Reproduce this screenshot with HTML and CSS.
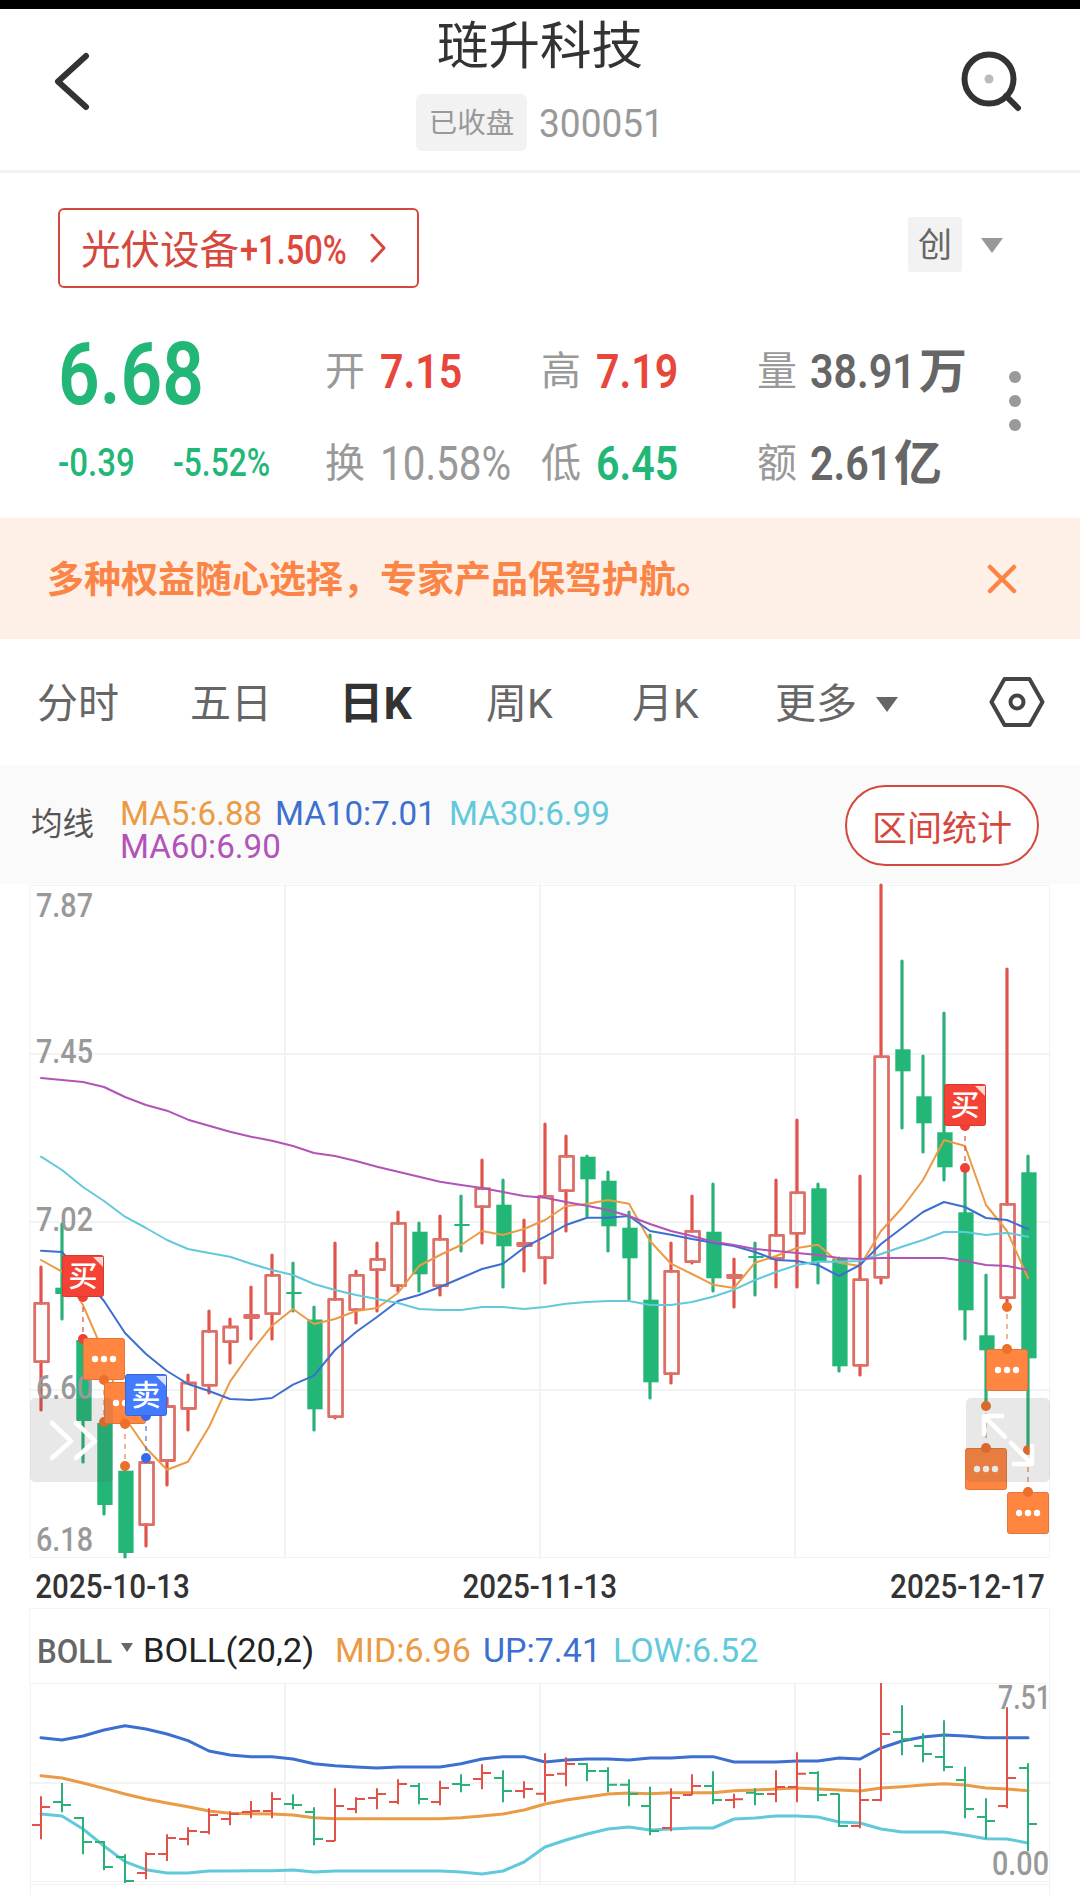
FILE: index.html
```html
<!DOCTYPE html>
<html lang="zh-CN">

<head>
    <meta charset="UTF-8">
    <meta name="viewport" content="width=device-width, initial-scale=1.0">
    <title>琏升科技 300051</title>
    <link rel="stylesheet" href="styles.css">
</head>

<body>
    <header class="header">
        <svg class="back" width="40" height="60" viewBox="0 0 40 60">
            <path d="M34 5L6 30.500L34 56" />
        </svg>
        <div class="stock">
            <h1>琏升科技</h1>
            <div class="stock-sub">
                <span class="status">已收盘</span>
                <span class="code">300051</span>
            </div>
        </div>
        <svg class="search" width="64" height="64" viewBox="0 0 64 64">
            <circle cx="31" cy="29" r="24.500" />
            <path d="M48 46L60 58" />
            <circle class="search-dot" cx="31" cy="29" r="4.500" />
        </svg>
    </header>

    <section class="quote">
        <div class="quote-top">
            <div class="sector">
                <span class="sector-name">光伏设备</span>
                <span class="sector-rate">+1.50%</span>
                <svg width="18" height="30" viewBox="0 0 18 30">
                    <path d="M3 2L15 15L3 28" />
                </svg>
            </div>
            <div class="board">
                <span class="board-tag">创</span>
                <i class="triangle"></i>
            </div>
        </div>
        <div class="quote-main">
            <div class="price">
                <div class="price-now">6.68</div>
                <div class="price-diff">
                    <span><b>-0.39</b></span>
                    <span><b>-5.52%</b></span>
                </div>
            </div>
            <div class="cells">
                <div class="cell"><label>开</label><b class="red">7.15</b></div>
                <div class="cell"><label>高</label><b class="red">7.19</b></div>
                <div class="cell"><label>量</label><b class="vol">38.91</b><em>万</em></div>
                <div class="cell"><label>换</label><b class="gray">10.58%</b></div>
                <div class="cell"><label>低</label><b class="green">6.45</b></div>
                <div class="cell"><label>额</label><b class="amt">2.61</b><em>亿</em></div>
            </div>
            <div class="more"><i></i><i></i><i></i></div>
        </div>
    </section>

    <div class="banner">
        <span>多种权益随心选择，专家产品保驾护航。</span>
        <svg width="30" height="30" viewBox="0 0 30 30">
            <path d="M3 3L27 27M27 3L3 27" />
        </svg>
    </div>

    <nav class="tabs">
        <span class="tab">分时</span>
        <span class="tab">五日</span>
        <span class="tab active">日K</span>
        <span class="tab">周K</span>
        <span class="tab">月K</span>
        <span class="tab">更多<i class="triangle"></i></span>
        <svg class="setting" width="56" height="52" viewBox="0 0 56 52">
            <path d="M15.500 3H40.500L53.500 26L40.500 49H15.500L2.500 26Z" />
            <circle cx="28" cy="26" r="6.500" />
        </svg>
    </nav>

    <div class="ma">
        <span class="ma-name">均线</span>
        <div class="ma-list">
            <span class="orange">MA5:6.88</span>
            <span class="blue">MA10:7.01</span>
            <span class="cyan">MA30:6.99</span>
            <span class="purple">MA60:6.90</span>
        </div>
        <button class="range">区间统计</button>
    </div>

    <svg id="kline" class="chart" width="1080" height="676" viewBox="0 884 1080 676"></svg>

    <div class="dates">
        <span>2025-10-13</span>
        <span>2025-11-13</span>
        <span>2025-12-17</span>
    </div>

    <div class="boll-head">
        <span class="boll-name">BOLL</span>
        <i class="triangle"></i>
        <span class="boll-param">BOLL(20,2)</span>
        <span class="boll-mid orange">MID:6.96</span>
        <span class="boll-up blue">UP:7.41</span>
        <span class="cyan">LOW:6.52</span>
    </div>

    <svg id="boll" class="chart" width="1080" height="212" viewBox="0 1683 1080 212"></svg>

    <script src="chart.js"></script>
</body>

</html>
```
FILE: styles.css
```css
* {
    margin: 0;
    padding: 0;
    box-sizing: border-box;
}

body {
    width: 1080px;
    height: 1895px;
    overflow: hidden;
    background-color: #fff;
    color: #333;
    font-family: Roboto, "Noto Sans CJK SC", sans-serif;
}

svg {
    display: block;
    flex-shrink: 0;
    fill: none;
    stroke-linecap: round;
    stroke-linejoin: round;
}

i,
em {
    font-style: normal;
}

.red {
    color: #e9463b;
}

.green {
    color: #22b777;
}

.orange {
    color: #eb9a45;
}

.blue {
    color: #3d6fd0;
}

.cyan {
    color: #62c9da;
}

.purple {
    color: #b154b8;
}

.triangle {
    display: inline-block;
    border-left: 11px solid transparent;
    border-right: 11px solid transparent;
    border-top: 15px solid #999;
}

/* 顶部 */
.header {
    height: 173px;
    border-top: 9px solid #000;
    border-bottom: 3px solid #f2f2f2;
    padding: 0 56px 0 52px;
    display: flex;
    justify-content: space-between;
}

.back {
    margin-top: 42px;
    stroke: #333;
    stroke-width: 6;
}

.search {
    margin-top: 41px;
    margin-right: 2px;
    stroke: #333;
    stroke-width: 6;
}

.search .search-dot {
    fill: #bbb;
    stroke: none;
}

.stock {
    padding-left: 26px;
    text-align: center;
}

.stock h1 {
    padding-left: 4px;
    font-size: 51.5px;
    font-weight: 400;
    line-height: 76px;
}

.stock-sub {
    display: flex;
    align-items: center;
    margin-top: 9px;
    color: #999;
}

.status {
    width: 111px;
    height: 57px;
    line-height: 59px;
    border-radius: 6px;
    background-color: #f2f2f2;
    font-size: 28.5px;
}

.code {
    width: 121px;
    margin-left: 12px;
    padding-top: 2px;
    font-size: 38px;
    transform: scaleX(0.975);
    transform-origin: left;
}

/* 行情 */
.quote {
    height: 345px;
    padding: 35px 58px 0;
}

.quote-top {
    display: flex;
    justify-content: space-between;
}

.sector {
    width: 361px;
    height: 80px;
    padding-left: 21px;
    border: 2px solid #d5483e;
    border-radius: 6px;
    display: flex;
    align-items: center;
    font-size: 39.5px;
    color: #d5483e;
}

.sector-name {
    margin-top: -3px;
}

.sector-rate {
    width: 129px;
    padding-top: 5px;
    margin-left: 1px;
    font-size: 40px;
    font-weight: 500;
    white-space: nowrap;
    color: #e0473c;
    transform: scaleX(0.815);
    transform-origin: left;
}

.sector svg {
    stroke: #d5483e;
    stroke-width: 3;
}

.board {
    display: flex;
    align-items: center;
    height: 72px;
    padding-right: 19px;
}

.board-tag {
    width: 54px;
    height: 55px;
    margin-right: 19px;
    background-color: #f2f2f2;
    border-radius: 3px;
    font-size: 34px;
    line-height: 56px;
    text-align: center;
    color: #666;
}

.board .triangle {
    margin-top: 2px;
}

.quote-main {
    display: flex;
    margin-top: 37px;
}

.price {
    width: 267px;
    color: #22b777;
}

.price-now {
    height: 98px;
    font-size: 88px;
    font-weight: 600;
    line-height: 98px;
    transform: scaleX(0.83);
    transform-origin: left;
}

.price-diff {
    display: flex;
    margin-top: 16px;
}

.price-diff span {
    width: 115px;
}

.price-diff b {
    display: inline-block;
    font-size: 38px;
    font-weight: 500;
    line-height: 48px;
    transform: scaleX(0.87);
    transform-origin: left;
}

.price-diff span:last-child b {
    transform: scaleX(0.835);
}

.cells {
    display: grid;
    grid-template-columns: 216px 216px 240px;
    grid-template-rows: 92px 92px;
}

.cell {
    display: flex;
    line-height: 93px;
    white-space: nowrap;
}

.cell label {
    width: 55px;
    font-size: 40px;
    color: #999;
}

.cell b {
    font-size: 49px;
    font-weight: 600;
    transform: scaleX(0.84);
    transform-origin: left;
}

.cell .gray {
    font-weight: 400;
    color: #999;
    transform: scaleX(0.825);
}

.cell .vol,
.cell .amt,
.cell em {
    color: #666;
}

.cell .vol {
    margin-left: -2px;
    margin-right: -17px;
}

.cell .amt {
    margin-left: -2px;
    margin-right: -14px;
}

.cell em {
    font-size: 48px;
    font-weight: 700;
}

.more {
    width: 12px;
    margin-left: 12px;
    padding-top: 46px;
    display: flex;
    flex-direction: column;
    gap: 12px;
}

.more i {
    width: 12px;
    height: 12px;
    border-radius: 50%;
    background-color: #999;
}

/* 提示条 */
.banner {
    height: 121px;
    padding: 0 63px 0 47px;
    display: flex;
    align-items: center;
    justify-content: space-between;
    background-color: #fff0e7;
    font-size: 37px;
    font-weight: 700;
    color: #fb8546;
}

.banner span {
    margin-top: -3px;
}

.banner svg {
    stroke: #fb8546;
    stroke-width: 4.5;
}

/* 周期 */
.tabs {
    height: 126px;
    padding: 0 35px 0 37px;
    display: flex;
    align-items: center;
    font-size: 41px;
    color: #666;
}

.tab {
    width: 148px;
    margin-right: 5px;
    margin-top: -5px;
    white-space: nowrap;
}

.tab.active {
    width: 147px;
    margin-left: -4px;
    margin-right: 0;
    font-size: 44.5px;
    font-weight: 700;
    color: #333;
}

.tab:nth-child(4) {
    width: 146px;
    margin-right: 0;
}

.tab:nth-child(5) {
    width: 143px;
    margin-right: 0;
}

.tab:nth-child(6) {
    flex: 1;
}

.tab .triangle {
    margin-left: 19px;
    margin-bottom: 6px;
    border-top-color: #666;
}

.setting {
    stroke: #444;
    stroke-width: 4;
}

/* 均线 */
.ma {
    height: 119px;
    padding: 0 41px 0 31px;
    display: flex;
    align-items: center;
    background-color: #fafafa;
}

.ma-name {
    width: 89px;
    margin-top: -8px;
    font-size: 31.5px;
    color: #555;
}

.ma-list {
    width: 725px;
    margin-top: 10px;
}

.ma-list span {
    float: left;
    width: 155px;
    font-size: 34px;
    line-height: 33px;
    white-space: nowrap;
    transform: scaleX(0.975);
    transform-origin: left;
}

.ma-list .blue {
    width: 174px;
}

.ma-list .cyan {
    width: 300px;
}

.ma-list .purple {
    clear: both;
}

.range {
    width: 194px;
    height: 81px;
    margin-top: 1px;
    border: 2px solid #d5483e;
    border-radius: 41px;
    background-color: #fff;
    font-family: inherit;
    font-size: 35px;
    color: #d5483e;
}

/* 日期 */
.dates {
    height: 48px;
    padding: 1px 35px 0;
    display: flex;
    justify-content: space-between;
    font-size: 34px;
    font-weight: 500;
    line-height: 51px;
}

.dates span {
    transform: scaleX(0.87);
}

.dates span:first-child {
    transform-origin: 2px;
}

.dates span:last-child {
    transform-origin: right;
}

/* BOLL */
.boll-head {
    width: 1021px;
    height: 75px;
    margin-left: 29px;
    padding-left: 7px;
    padding-top: 7px;
    border: 1px solid #f4f4f4;
    border-bottom: none;
    display: flex;
    align-items: center;
    font-size: 34px;
}

.boll-name {
    width: 84px;
    padding-top: 3px;
    color: #666;
    font-weight: 500;
    transform: scaleX(0.92);
    transform-origin: left;
}

.boll-head .triangle {
    border-width: 9px 6.5px 0;
    border-top-color: #666;
    margin-bottom: 4px;
}

.boll-param {
    width: 192px;
    margin-left: 10px;
    color: #222;
    transform: scaleX(1.015);
    transform-origin: left;
}

.boll-mid {
    width: 148px;
}

.boll-up {
    width: 130px;
}

/* 图表 */
.chart {
    overflow: visible;
}

.chart .grid {
    stroke: #f3f3f3;
    stroke-width: 2;
}

.chart .frame {
    stroke: #f3f3f3;
    stroke-width: 1;
}

.chart .axis {
    fill: #999;
    font-size: 34px;
    font-weight: 500;
}

.chart .up {
    stroke: #e0524a;
}

.chart .down {
    stroke: #2bb078;
}

.chart .wick {
    stroke-width: 3.2;
}

.chart .box {
    fill: none;
    stroke: #dc6f66;
    stroke-width: 2.8;
}

.chart .bar {
    fill: #22b777;
}

.chart .ma-line {
    stroke-width: 2;
}

.chart .boll-line {
    stroke-width: 3;
}

.chart .ohlc {
    stroke-width: 2;
    stroke-linecap: butt;
}

.chart .marker {
    fill: #fff;
    font-size: 29px;
    font-weight: 500;
    text-anchor: middle;
}

.chart .dash {
    stroke-width: 2;
    stroke-dasharray: 5 5;
    stroke-linecap: butt;
    opacity: 0.55;
}

.chart .float-btn {
    fill: #505050;
    fill-opacity: 0.13;
}

.chart .float-icon {
    stroke: #fff;
    stroke-width: 4.5;
}
```
FILE: chart.js
```js
const ORANGE = '#eb9a45', BLUE = '#3d6fd0', CYAN = '#62c9da', PURPLE = '#b154b8';

// 涨跌, 最高, 实体上沿, 实体下沿, 最低
const candles = [
    [1, 1266, 1303.3, 1361.7, 1411], [0, 1223, 1287.7, 1294, 1320], [0, 1338, 1340, 1421, 1463],
    [0, 1422, 1423, 1505, 1515], [0, 1464, 1470.7, 1553, 1558], [1, 1458, 1462.5, 1524.7, 1547],
    [1, 1397, 1406.5, 1460.5, 1486], [1, 1374, 1383, 1408.5, 1431], [1, 1310, 1331.3, 1385.3, 1394],
    [1, 1318, 1327, 1341.7, 1364], [1, 1286, 1315.5, 1317.5, 1340], [1, 1254, 1275.3, 1313.7, 1340],
    [0, 1262, 1292, 1294, 1312], [0, 1306, 1319.5, 1409.3, 1431], [1, 1242, 1299.3, 1416.7, 1419],
    [1, 1270, 1275.3, 1309.7, 1324], [1, 1242, 1259.3, 1269.7, 1312], [1, 1211, 1223.3, 1285.7, 1292],
    [0, 1222, 1231.7, 1274.3, 1292], [1, 1215, 1239.3, 1285.7, 1296], [0, 1195, 1224, 1226, 1252],
    [1, 1159, 1188.7, 1206.7, 1244], [0, 1179, 1204.7, 1246.3, 1288], [1, 1219, 1243.5, 1245.5, 1272],
    [1, 1123, 1196.3, 1257.7, 1284], [1, 1135, 1156.3, 1190.7, 1232], [0, 1155, 1156.7, 1179.3, 1217],
    [0, 1171, 1180.7, 1226.3, 1252], [0, 1211, 1227.7, 1258.3, 1300], [0, 1234, 1299.7, 1382.3, 1399],
    [1, 1242, 1271.3, 1373.7, 1384], [1, 1195, 1231.3, 1261.7, 1264], [0, 1183, 1231.7, 1278.3, 1292],
    [1, 1258, 1275.5, 1277.5, 1308], [0, 1242, 1256, 1258, 1296], [1, 1179, 1235.3, 1258.3, 1288],
    [1, 1119, 1192.7, 1233.3, 1288], [0, 1183, 1188.3, 1262, 1284], [0, 1257, 1259, 1366.3, 1372],
    [1, 1175, 1279.7, 1365.3, 1376], [1, 884, 1056.7, 1277.3, 1284], [0, 960, 1049.3, 1071.3, 1129],
    [0, 1055, 1096.3, 1123.3, 1153], [0, 1012, 1132.3, 1167.3, 1181], [0, 1168, 1212.3, 1310.3, 1340],
    [0, 1274, 1335.3, 1350.3, 1405], [1, 968, 1204.3, 1297.7, 1303], [0, 1155, 1172.3, 1358.3, 1448]
];

const ma60 = [1078, 1080, 1082, 1087, 1097, 1105, 1110.7, 1119.7, 1125.7, 1131.7, 1136.7, 1140.7, 1146, 1153, 1156, 1161, 1166.7, 1171.7, 1176.7, 1181.7, 1185, 1188, 1192, 1196, 1197.7, 1202, 1205.7, 1210, 1216, 1224, 1231, 1236, 1241.7, 1245, 1249, 1251, 1253, 1255, 1258, 1259, 1258, 1258, 1258, 1258, 1261, 1265, 1266, 1270];
const ma30 = [1156.7, 1170, 1187, 1201, 1216.7, 1228, 1240, 1249, 1253, 1256.7, 1263.7, 1270, 1275, 1284, 1290, 1295, 1299, 1303, 1309, 1310, 1310, 1307, 1307, 1309, 1307, 1303.7, 1302, 1301, 1301, 1305, 1305, 1302, 1296.7, 1289.7, 1280, 1272, 1265, 1261.5, 1261.7, 1261, 1254, 1246.7, 1240, 1232, 1232, 1235, 1232.7, 1236.7];
const ma10 = [1250.7, 1252, 1276, 1301, 1333, 1354, 1371, 1384, 1391, 1399, 1400, 1398, 1384.7, 1375.7, 1350, 1332, 1317, 1301, 1295, 1287, 1278, 1269, 1263.7, 1247.7, 1236.7, 1225, 1217.7, 1217.7, 1216, 1231, 1234.7, 1239, 1242.7, 1246, 1252, 1260, 1261, 1265, 1276, 1265, 1244, 1228, 1212, 1202, 1207, 1218, 1220, 1229];
const ma5 = [1260, 1271.7, 1305, 1353.7, 1417.7, 1448, 1469.7, 1461.7, 1427, 1381.7, 1352, 1325.7, 1309, 1324, 1319, 1311, 1308, 1293, 1266, 1255, 1245, 1231, 1235, 1229, 1220, 1206, 1204, 1200, 1203.7, 1241, 1263.7, 1274, 1284.7, 1288, 1262.7, 1256, 1248, 1244.7, 1262.7, 1266, 1231, 1208, 1180, 1140, 1146, 1205, 1231, 1278];

// BOLL 三条线, 单位为 1/3 像素, 从 1600 起
const bollUp = [413, 420, 408, 390, 377, 387, 402, 422, 453, 465, 470, 470, 477, 491, 497, 501, 504, 501, 501, 501, 491, 477, 470, 470, 486, 480, 477, 477, 480, 474, 474, 470, 470, 486, 486, 486, 483, 483, 474, 477, 444, 423, 411, 405, 408, 413, 413, 413];
const bollMid = [527, 534, 549, 565, 582, 597, 609, 620, 633, 640, 641, 642, 645, 653, 656, 656, 656, 656, 656, 656, 653, 648, 642, 630, 612, 600, 591, 582, 579, 581, 578, 578, 578, 572, 570, 567, 564, 567, 570, 573, 564, 560, 555, 551, 555, 564, 567, 572];
const bollLow = [642, 648, 687, 738, 785, 809, 819, 819, 813, 813, 812, 812, 810, 816, 813, 813, 813, 813, 813, 813, 816, 822, 813, 786, 741, 720, 702, 687, 681, 690, 687, 684, 684, 657, 654, 648, 648, 651, 666, 669, 687, 696, 696, 696, 705, 716, 717, 729];

// 最高, 最低, 开, 收
const ohlc = [
    [589, 718, 675, 621], [549, 637, 606, 615], [651, 763, 654, 726], [723, 811, 726, 801],
    [763, 849, 771, 843], [757, 838, 819, 762], [703, 783, 762, 714], [682, 736, 717, 693],
    [625, 703, 696, 645], [634, 676, 657, 642], [603, 655, 636, 633], [577, 655, 633, 597],
    [583, 628, 612, 615], [622, 736, 636, 717], [565, 723, 723, 618], [592, 640, 627, 597],
    [565, 628, 594, 582], [538, 613, 606, 552], [549, 613, 558, 597], [542, 616, 606, 564],
    [523, 577, 552, 555], [493, 568, 537, 519], [511, 607, 534, 573], [544, 595, 573, 567],
    [460, 605, 581, 525], [472, 559, 521, 492], [490, 544, 492, 513], [502, 577, 513, 554],
    [538, 619, 554, 582], [560, 706, 618, 693], [565, 694, 684, 594], [523, 585, 585, 558],
    [514, 613, 558, 600], [581, 625, 600, 598], [565, 616, 578, 582], [511, 607, 582, 561],
    [457, 607, 561, 521], [514, 604, 519, 585], [581, 681, 582, 678], [505, 685, 678, 600],
    [249, 604, 600, 402], [316, 466, 396, 418], [400, 487, 438, 462], [361, 514, 471, 501],
    [500, 655, 540, 627], [595, 716, 651, 663], [322, 625, 618, 534], [490, 754, 504, 672]
];

// 类型, 方块中心 x, 方块上沿 y, K线端圆点 y
const markers = [
    ['buy', 83, 1255, 1339], ['more', 104, 1338, 1422], ['more', 125, 1382, 1466], ['sell', 146, 1374, 1458],
    ['buy', 965, 1084, 1168], ['more', 1007, 1349, 1307], ['more', 986, 1448, 1406], ['more', 1028, 1492, 1450]
];

const px = i => 41 + 21 * i;
const third = v => 1600 + v / 3;

function line(data, color, cls) {
    const pts = data.map((y, i) => px(i) + ',' + y).join(' ');
    return `<polyline class="${cls}" points="${pts}" stroke="${color}"/>`;
}

function axis(x, y, text, width = 57) {
    return `<text class="axis" x="${x}" y="${y}" textLength="${width}" lengthAdjust="spacingAndGlyphs">${text}</text>`;
}

function candle(c, i) {
    const [up, high, top, bottom, low] = c;
    const x = px(i);
    if (up) {
        return `<path class="up wick" d="M${x} ${high + 1}V${top}M${x} ${bottom}V${low - 1}"/>
            <rect class="box" x="${x - 6.3}" y="${top}" width="13.8" height="${bottom - top}"/>`;
    }
    return `<path class="down wick" d="M${x} ${high + 1}V${low - 1}"/>
        <rect class="bar" x="${x - 6.7}" y="${top}" width="15.3" height="${bottom - top}"/>`;
}

function marker(m) {
    const [type, x, y, dotY] = m;
    const fill = { buy: '#f44336', sell: '#437bff', more: '#ff8540' }[type];
    const edge = { buy: '#d83a2e', sell: '#3a66d8', more: '#e0763a' }[type];
    const dot = { buy: '#ee4035', sell: '#346bec', more: '#ec7029' }[type];
    const edgeY = dotY > y ? y + 42 : y;
    let s = `<line class="dash" x1="${x}" x2="${x}" y1="${edgeY}" y2="${dotY}" stroke="${edge}"/>
        <circle cx="${x}" cy="${dotY}" r="5" fill="${dot}"/>`;
    if (type === 'more') {
        s += `<rect x="${x - 20.5}" y="${y + 0.5}" width="41" height="41" rx="2" fill="${fill}" stroke="${edge}"/>`;
        [-9, 0, 9].forEach(d => s += `<circle cx="${x + d}" cy="${y + 21}" r="3.2" fill="#fff"/>`);
        s += `<circle cx="${x}" cy="${edgeY}" r="5" fill="${dot}"/>`;
    } else {
        s += `<circle cx="${x}" cy="${edgeY}" r="5" fill="${dot}"/>
            <rect x="${x - 20.5}" y="${y + 0.5}" width="41" height="41" rx="2" fill="${fill}" stroke="${edge}"/>
            <path d="M${x + 10} ${y + 2}H${x + 20}V${y + 12}Z" fill="#fff" fill-opacity="0.8"/>
            <text class="marker" x="${x}" y="${y + 32}">${type === 'buy' ? '买' : '卖'}</text>`;
    }
    return s;
}

document.getElementById('kline').innerHTML = `
    <rect class="frame" x="30.5" y="885.5" width="1019" height="672"/>
    <path class="grid" d="M285 885V1558M540 885V1558M795 885V1558M30 1054H1050M30 1222H1050M30 1390H1050"/>
    ${candles.map(candle).join('')}
    ${line(ma5, ORANGE, 'ma-line')}
    ${line(ma10, BLUE, 'ma-line')}
    ${line(ma30, CYAN, 'ma-line')}
    ${line(ma60, PURPLE, 'ma-line')}
    ${axis(36, 917, '7.87')}
    ${axis(36, 1063, '7.45')}
    ${axis(36, 1231, '7.02')}
    ${axis(36, 1399, '6.60')}
    ${axis(36, 1551, '6.18')}
    ${markers.map(marker).join('')}
    <rect class="float-btn" x="30" y="1398" width="83" height="84" rx="5"/>
    <path class="float-icon" d="M52 1423L71 1441L52 1458M76 1423L95 1441L76 1458"/>
    <rect class="float-btn" x="966" y="1398" width="84" height="84" rx="5"/>
    <path class="float-icon" d="M1002 1416H984V1434M984 1416L1005 1437M1011 1443L1032 1464M1014 1464H1032V1446"/>`;

document.getElementById('boll').innerHTML = `
    <path class="frame" d="M30 1683.500H1050M30.500 1683V1895M1049.500 1683V1895M30 1881.500H1050M30 1884.500H1050"/>
    <path class="grid" d="M285 1683V1884M540 1683V1884M795 1683V1884M30 1783H1050"/>
    ${line(bollUp.map(third), BLUE, 'boll-line')}
    ${line(bollMid.map(third), ORANGE, 'boll-line')}
    ${line(bollLow.map(third), CYAN, 'boll-line')}
    ${ohlc.map((o, i) => {
        const [h, l, op, cl] = o.map(third);
        const x = px(i);
        return `<path class="ohlc ${candles[i][0] ? 'up' : 'down'}" d="M${x} ${h}V${l}M${x - 9} ${op}H${x}M${x} ${cl}H${x + 9}"/>`;
    }).join('')}
    ${axis(998, 1709, '7.51', 53)}
    ${axis(992, 1875, '0.00')}`;
```
